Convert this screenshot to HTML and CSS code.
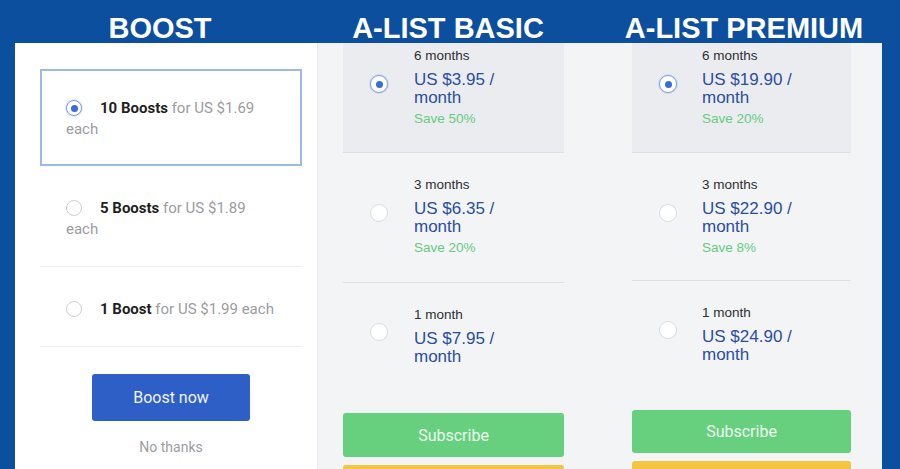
FILE: index.html
```html
<!DOCTYPE html>
<html lang="en">
<head>
<meta charset="utf-8">
<title>Boost and A-List plans</title>
<link rel="stylesheet" href="styles.css">
</head>
<body>
<div class="page">
  <header class="titles">
    <h1 class="title title-boost">BOOST</h1>
    <h1 class="title title-basic">A-LIST BASIC</h1>
    <h1 class="title title-premium">A-LIST PREMIUM</h1>
  </header>
  <main class="panels">
    <section class="boost-panel">
      <div class="opt opt-selected">
        <span class="radio radio-on"></span><b>10 Boosts</b> for US $1.69 each
      </div>
      <div class="opt opt-line">
        <span class="radio"></span><b>5 Boosts</b> for US $1.89 each
      </div>
      <div class="opt opt-line">
        <span class="radio"></span><b>1 Boost</b> for US $1.99 each
      </div>
      <div class="boost-actions">
        <button class="btn-boost">Boost now</button>
        <div class="no-thanks">No thanks</div>
      </div>
    </section>
    <section class="alist-panel">
      <div class="col col-basic">
        <div class="card card-first card-selected">
          <span class="radio big radio-on"></span>
          <div class="card-text">
            <div class="term">6 months</div>
            <div class="price">US $3.95 /<br>month</div>
            <div class="save">Save 50%</div>
          </div>
        </div>
        <div class="card card-mid">
          <span class="radio big"></span>
          <div class="card-text">
            <div class="term">3 months</div>
            <div class="price">US $6.35 /<br>month</div>
            <div class="save">Save 20%</div>
          </div>
        </div>
        <div class="card card-last">
          <span class="radio big"></span>
          <div class="card-text">
            <div class="term">1 month</div>
            <div class="price">US $7.95 /<br>month</div>
          </div>
        </div>
        <button class="btn-sub">Subscribe</button>
        <div class="btn-yellow"></div>
      </div>
      <div class="col col-premium">
        <div class="card card-first card-selected">
          <span class="radio big radio-on"></span>
          <div class="card-text">
            <div class="term">6 months</div>
            <div class="price">US $19.90 /<br>month</div>
            <div class="save">Save 20%</div>
          </div>
        </div>
        <div class="card card-mid">
          <span class="radio big"></span>
          <div class="card-text">
            <div class="term">3 months</div>
            <div class="price">US $22.90 /<br>month</div>
            <div class="save">Save 8%</div>
          </div>
        </div>
        <div class="card card-last">
          <span class="radio big"></span>
          <div class="card-text">
            <div class="term">1 month</div>
            <div class="price">US $24.90 /<br>month</div>
          </div>
        </div>
        <button class="btn-sub">Subscribe</button>
        <div class="btn-yellow"></div>
      </div>
    </section>
  </main>
</div>
</body>
</html>
```
FILE: styles.css
```css
* { box-sizing: border-box; }
html, body { margin: 0; padding: 0; }
body {
  background: #0b4f9e;
  font-family: Roboto, "Liberation Sans", Arial, sans-serif;
  overflow: hidden;
}
.page {
  height: 469px;
  display: flex;
  flex-direction: column;
}
.titles {
  height: 43px;
  flex: none;
  display: flex;
  padding-left: 15px;
}
.title {
  margin: 0;
  padding-top: 14px;
  font-family: "Liberation Sans", Arial, sans-serif;
  font-weight: bold;
  font-size: 29px;
  line-height: 29px;
  color: #fff;
  text-align: center;
  white-space: nowrap;
}
.title-boost { width: 290px; }
.title-basic { width: 286px; }
.title-premium { width: 306px; }

.panels {
  flex: 1;
  display: flex;
  padding: 0 18px 0 15px;
  overflow: hidden;
}
.boost-panel {
  width: 302px;
  flex: none;
  background: #fff;
  padding: 26px 15px 0 25px;
}
.opt {
  font-size: 15px;
  line-height: 21px;
  color: #9b9ca1;
  padding: 32px 24px 26px 26px;
}
.opt b { color: #1f1f22; font-weight: 700; }
.opt-selected {
  border: 2px solid #9db9ec;
  padding: 27px 22px 24px 24px;
}
.opt-line { border-bottom: 1px solid #f0f0f2; }
.radio {
  display: inline-block;
  width: 16px;
  height: 16px;
  border-radius: 50%;
  border: 1px solid #cfd0d4;
  background: #fff;
  vertical-align: -3px;
  margin-right: 18px;
  position: relative;
}
.radio-on {
  border-color: #7e9fe3;
  box-shadow: 0 0 0 1px rgba(126, 159, 227, 0.25);
}
.radio-on::after {
  content: "";
  position: absolute;
  left: 50%;
  top: 50%;
  width: 7px;
  height: 7px;
  margin: -3.5px 0 0 -3.5px;
  border-radius: 50%;
  background: #3b6bd4;
}
.boost-actions {
  display: flex;
  flex-direction: column;
  align-items: center;
  padding-top: 27px;
}
.btn-boost {
  width: 158px;
  height: 47px;
  flex: none;
  border: none;
  border-radius: 3px;
  background: #2e5fc7;
  color: #f1f4fc;
  font-family: Roboto, "Liberation Sans", Arial, sans-serif;
  font-size: 16px;
}
.no-thanks {
  margin-top: 17px;
  font-size: 14px;
  line-height: 18px;
  color: #9c9da2;
}

.alist-panel {
  flex: 1;
  display: flex;
  gap: 68px;
  background: #f3f4f6;
  border-left: 1px solid #e8e9ec;
  padding-left: 25px;
}
.col { flex: none; display: flex; flex-direction: column; }
.col-basic { width: 221px; }
.col-premium { width: 219px; }
.card {
  flex: none;
  display: flex;
  align-items: center;
  padding: 23px 10px 25px 27px;
  border-bottom: 1px solid #dfe0e4;
}
.card-first { padding-top: 4px; padding-bottom: 24px; }
.card-selected { background: #ebecf0; }
.card-last { border-bottom: none; padding-bottom: 24px; }
.col-premium .card-mid { padding-bottom: 23px; }
.col-premium .card-last { padding-top: 23px; }
.radio.big {
  width: 18px;
  height: 18px;
  margin: 0 26px 7px 0;
  flex: none;
  border-color: #dcdde1;
}
.radio.big.radio-on { border-color: #7e9fe3; }
.col-premium .radio.big { margin-right: 25px; }
.card-text { font-family: "Liberation Sans", Arial, sans-serif; }
.term {
  font-size: 13.5px;
  line-height: 18px;
  color: #2e2f33;
}
.price {
  margin-top: 6px;
  font-size: 17px;
  line-height: 17.5px;
  color: #2b4e9f;
}
.save {
  margin-top: 4px;
  font-size: 13.5px;
  line-height: 18px;
  color: #67cb82;
}
.btn-sub {
  flex: none;
  margin-top: 24px;
  height: 44px;
  border: none;
  border-radius: 3px;
  background: #66d07f;
  color: #eefbf1;
  font-family: Roboto, "Liberation Sans", Arial, sans-serif;
  font-size: 16px;
}
.col-premium .btn-sub { margin-top: 23px; height: 43px; }
.btn-yellow {
  margin-top: 8px;
  height: 40px;
  flex: none;
  border-radius: 3px;
  background: #f5c443;
}
```
